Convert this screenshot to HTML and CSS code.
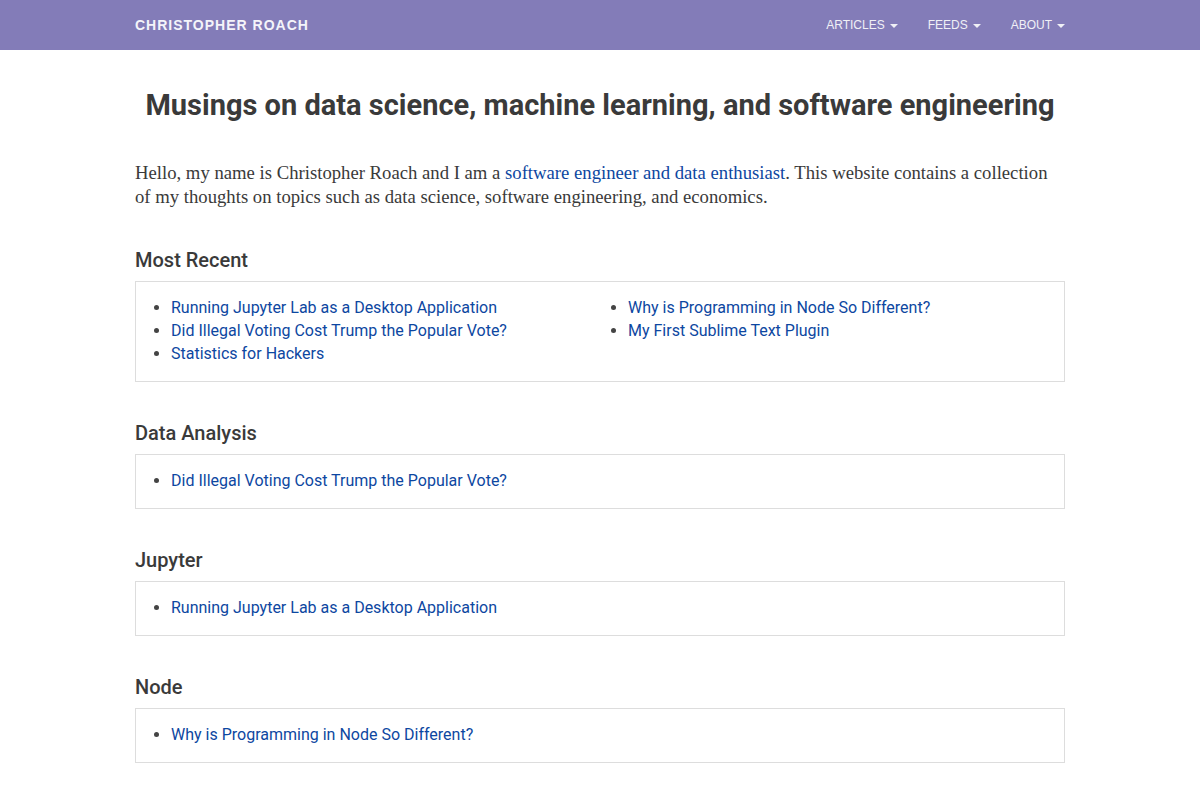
FILE: index.html
```html
<!DOCTYPE html>
<html lang="en">
<head>
<meta charset="utf-8">
<title>Christopher Roach</title>
<link rel="stylesheet" href="styles.css">
</head>
<body>
<header class="navbar">
  <div class="nav-inner">
    <a class="brand" href="#">CHRISTOPHER ROACH</a>
    <nav class="menu">
      <a href="#" class="menu-item">ARTICLES <span class="caret"></span></a>
      <a href="#" class="menu-item">FEEDS <span class="caret"></span></a>
      <a href="#" class="menu-item">ABOUT <span class="caret"></span></a>
    </nav>
  </div>
</header>
<main class="container">
  <h1 class="title">Musings on data science, machine learning, and software engineering</h1>
  <p class="intro">Hello, my name is Christopher Roach and I am a <a href="#">software engineer and data enthusiast</a>. This website contains a collection of my thoughts on topics such as data science, software engineering, and economics.</p>

  <section class="section">
    <h2 class="section-title">Most Recent</h2>
    <div class="box">
      <ul class="list two-col">
        <li><a href="#">Running Jupyter Lab as a Desktop Application</a></li>
        <li><a href="#">Did Illegal Voting Cost Trump the Popular Vote?</a></li>
        <li><a href="#">Statistics for Hackers</a></li>
        <li><a href="#">Why is Programming in Node So Different?</a></li>
        <li><a href="#">My First Sublime Text Plugin</a></li>
      </ul>
    </div>
  </section>

  <section class="section">
    <h2 class="section-title">Data Analysis</h2>
    <div class="box">
      <ul class="list">
        <li><a href="#">Did Illegal Voting Cost Trump the Popular Vote?</a></li>
      </ul>
    </div>
  </section>

  <section class="section">
    <h2 class="section-title">Jupyter</h2>
    <div class="box">
      <ul class="list">
        <li><a href="#">Running Jupyter Lab as a Desktop Application</a></li>
      </ul>
    </div>
  </section>

  <section class="section">
    <h2 class="section-title">Node</h2>
    <div class="box">
      <ul class="list">
        <li><a href="#">Why is Programming in Node So Different?</a></li>
      </ul>
    </div>
  </section>
</main>
</body>
</html>
```
FILE: styles.css
```css
* { box-sizing: border-box; }
html, body { margin: 0; padding: 0; background: #fff; }
body {
  font-family: "Liberation Serif", "DejaVu Serif", serif;
  color: #3a3a3a;
}
a { text-decoration: none; color: #0d47a1; }

.navbar {
  background: #837cb8;
  height: 50px;
}
.nav-inner {
  width: 930px;
  margin: 0 auto;
  height: 50px;
  display: flex;
  align-items: center;
  justify-content: space-between;
}
.brand {
  font-family: "Liberation Sans", Arial, sans-serif;
  font-weight: bold;
  font-size: 14px;
  letter-spacing: 1px;
  color: #f4f4fa;
}
.menu { display: flex; align-items: center; margin-right: -15px; }
.menu-item {
  font-family: "Liberation Sans", Arial, sans-serif;
  font-size: 12px;
  color: #f0f0f6;
  padding: 0 15px;
  line-height: 50px;
  display: flex;
  align-items: center;
  gap: 5px;
}
.caret {
  width: 0; height: 0;
  border-left: 4px solid transparent;
  border-right: 4px solid transparent;
  border-top: 4px solid #f0f0f6;
  margin-top: 1px;
}

.container {
  width: 930px;
  margin: 0 auto;
  padding-bottom: 40px;
}
.title {
  font-family: Roboto, "Liberation Sans", sans-serif;
  font-weight: bold;
  font-size: 29px;
  line-height: 34px;
  color: #3a3a3a;
  text-align: center;
  margin: 38px 0 0;
}
.intro {
  font-size: 18.7px;
  line-height: 24px;
  margin: 39px 0 0;
  color: #3a3a3a;
}
.section { margin-top: 40px; }
.section-title {
  font-family: Roboto, "Liberation Sans", sans-serif;
  font-weight: 500;
  font-size: 20px;
  line-height: 22px;
  color: #3a3a3a;
  margin: 0 0 10px;
}
.box {
  border: 1px solid #ddd;
  padding: 14px 15px 16px;
}
.list {
  list-style: disc;
  margin: 0;
  padding-left: 20px;
  font-family: Roboto, "Liberation Sans", sans-serif;
  font-size: 16px;
  line-height: 23px;
  color: #444;
}
.list li { break-inside: avoid; }
.two-col {
  column-count: 2;
  column-gap: 36px;
  min-height: 69px;
}
```
